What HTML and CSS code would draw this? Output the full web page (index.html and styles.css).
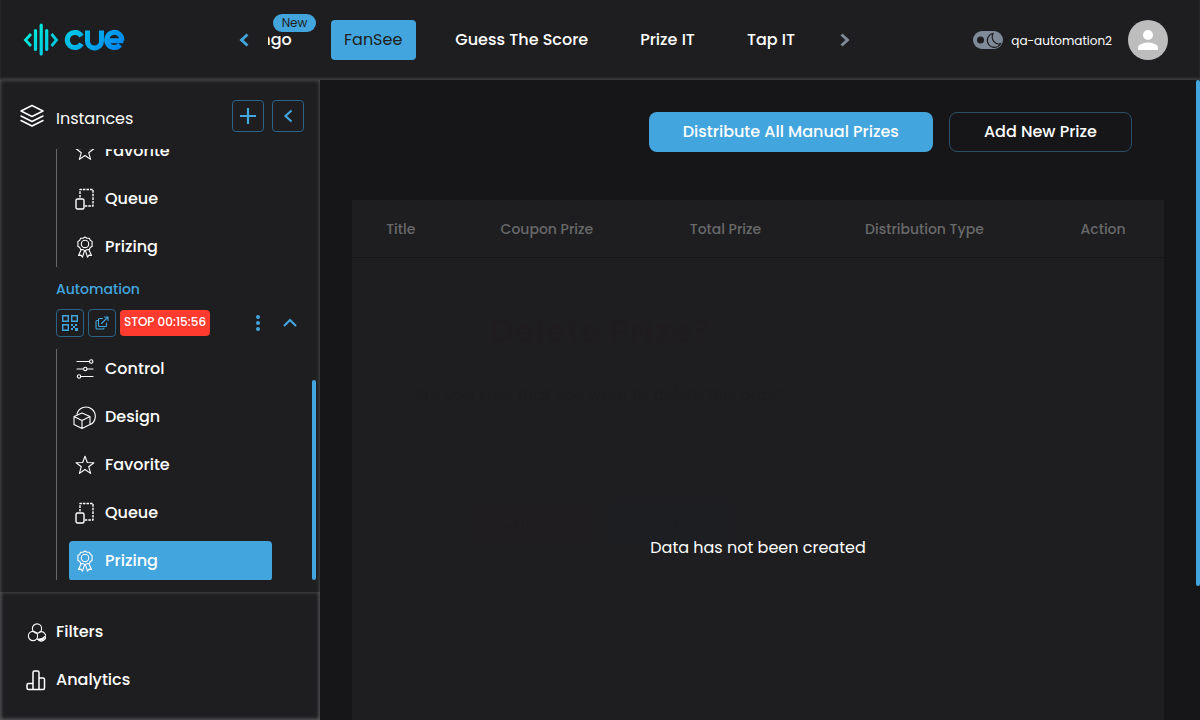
FILE: index.html
```html
<!DOCTYPE html>
<html lang="en">
<head>
<meta charset="utf-8">
<meta name="viewport" content="width=device-width, initial-scale=1">
<title>Cue – Prizing</title>
<link rel="stylesheet" href="styles.css">
</head>
<body>
<svg class="sprite" aria-hidden="true">
  <symbol id="i-star" viewBox="0 0 20 20"><path d="M10 1.200l2.300 6.300 6.600.2-5.200 4 1.900 6.700-5.600-3.900-5.600 3.900 1.900-6.700-5.200-4 6.600-.2z"/></symbol>
  <symbol id="i-queue" viewBox="0 0 20 22"><path d="M5 9.500V1.500h13v16.500H9.500" stroke-dasharray="2.600 1" stroke-width="1.400" stroke-linecap="butt"/><rect x="1" y="11" width="8" height="10" rx="1.500" stroke-width="1.400"/></symbol>
  <symbol id="i-prize" viewBox="0 0 20 22"><path d="M10 1l2 1.200 2.300.1 1 2 1.900 1.300-.2 2.300.2 2.300-1.900 1.300-1 2-2.300.1-2 1.200-2-1.200-2.300-.1-1-2-1.900-1.300.2-2.300-.2-2.300 1.900-1.300 1-2 2.300-.1z"/><circle cx="10" cy="7.900" r="3.700"/><path d="M6 14l-2.500 5.500 2.500-.4 1.500 2 2-6.300M14 14l2.500 5.500-2.500-.4-1.500 2-2-6.300"/></symbol>
  <symbol id="i-left" viewBox="0 0 16 16"><path d="M11.500 2.500L5.500 8l6 5.500"/></symbol>
</svg>
<header class="topbar">
  <a class="logo" href="#" aria-label="Cue">
    <svg width="104" height="36" viewBox="0 0 104 36" fill="none" stroke="url(#lg)">
      <defs><linearGradient id="lg" gradientUnits="userSpaceOnUse" x1="20" y1="-10" x2="85" y2="45"><stop offset="0" stop-color="#00f0d8"/><stop offset="1" stop-color="#0085f5"/></linearGradient></defs>
      <path d="M9 12L3.500 18l5.500 6M29.500 12l5 6-5 6" stroke-width="2.800"/>
      <path d="M13.500 8.500v19M19.200 3v29M24.700 8.500v19" stroke-width="3.200" stroke-linecap="round"/>
      <path d="M59.500 14.200a7.600 7.600 0 1 0 0 7.600M65.500 8.500v10.700a7 6.800 0 0 0 14 0V8.500M84.800 18.800h16.500M99.900 18.500a7.600 7.600 0 1 0-1.800 4.400" stroke-width="5"/>
    </svg>
  </a>
  <nav class="games" aria-label="Games">
    <button class="arrow accent" aria-label="Previous"><svg class="line heavy" width="16" height="16"><use href="#i-left"/></svg></button>
    <div class="tabs">
      <a class="tab first" href="#"><span class="badge">New</span>Bingo</a>
      <a class="tab active" href="#" aria-current="page">FanSee</a>
      <a class="tab" href="#">Guess The Score</a>
      <a class="tab" href="#">Prize IT</a>
      <a class="tab" href="#">Tap IT</a>
    </div>
    <button class="arrow muted" aria-label="Next"><svg class="line heavy flip" width="16" height="16"><use href="#i-left"/></svg></button>
  </nav>
  <div class="account">
    <label class="mode"><input type="checkbox" checked aria-label="Dark mode"><svg width="30" height="18" viewBox="0 0 30 18"><circle cx="7.500" cy="9" r="3.500" fill="#1e1e20"/><path d="M20 2.500a7 7 0 1 0 7.500 10.200c-5.500 1.600-10-4.200-7.500-10.200z" fill="none" stroke="#1e1e20" stroke-width="1.200"/></svg></label>
    <span class="user">qa-automation2</span>
    <button class="avatar" aria-label="Profile"><svg width="40" height="40" viewBox="0 0 40 40" fill="#fff"><circle cx="20" cy="15" r="5"/><path d="M10 30v-2.500c0-3.300 6.700-5 10-5s10 1.700 10 5V30z"/></svg></button>
  </div>
</header>
<div class="shell">
  <aside class="sidebar">
    <div class="head">
      <svg class="line thick" width="24" height="24" viewBox="0 0 24 24"><path d="M12 1.500L23 7l-11 5.500L1 7zM1 12l11 5.500L23 12M1 16.500l11 5.500 11-5.500"/></svg>
      <h2 class="heading">Instances</h2>
      <button class="square" aria-label="Add instance"><svg class="line bold" width="18" height="18" viewBox="0 0 18 18"><path d="M9 1v16M1 9h16"/></svg></button>
      <button class="square" aria-label="Collapse sidebar"><svg class="line bold" width="16" height="16"><use href="#i-left"/></svg></button>
    </div>
    <div class="instances">
      <ul class="tree">
        <li><a class="item" href="#"><svg class="line icon"><use href="#i-star"/></svg>Favorite</a></li>
        <li><a class="item" href="#"><svg class="line icon"><use href="#i-queue"/></svg>Queue</a></li>
        <li><a class="item" href="#"><svg class="line icon"><use href="#i-prize"/></svg>Prizing</a></li>
      </ul>
      <h3 class="name">Automation</h3>
      <div class="tools">
        <button class="tool" aria-label="QR code"><svg width="16" height="16" viewBox="0 0 16 16" fill="none" stroke="currentColor" stroke-width="1.400"><path d="M.7.700h5.600v5.600H.7zM9.700.7h5.600v5.600H9.700zM.7 9.700h5.600v5.600H.7z"/><path d="M9 9h2v2H9zM11 11h2v2h-2zM13 9h2v2h-2zM9 13h2v2H9zM13 13h3v3h-3z" fill="currentColor" stroke="none"/></svg></button>
        <button class="tool" aria-label="Open in new window"><svg class="line" width="14" height="14" viewBox="0 0 14 14"><path d="M7.500 2.500H4.500Q3.500 2.500 3.500 3.500v6q0 1 1 1h6q1 0 1-1V7M6.500 7.500L13 1M9.500 1H13v3.500M3 4.500H2Q1 4.500 1 5.500v6.500Q1 13 2 13h6q1 0 1-1"/></svg></button>
        <button class="stop">STOP 00:15:56</button>
        <button class="plain more" aria-label="More"><svg width="16" height="18" viewBox="0 0 16 18" fill="currentColor"><circle cx="8" cy="3" r="2"/><circle cx="8" cy="9" r="2"/><circle cx="8" cy="15" r="2"/></svg></button>
        <button class="plain" aria-label="Collapse"><svg class="line bold" width="16" height="16" viewBox="0 0 16 16"><path d="M2 11l6-6 6 6"/></svg></button>
      </div>
      <ul class="tree last">
        <li><a class="item" href="#"><svg class="line icon" viewBox="0 0 20 22"><path d="M2 3.500h12.500M2 11h6M12 11h6M6 18.500h12"/><circle cx="16.200" cy="3.500" r="1.700"/><circle cx="10.300" cy="11" r="1.700"/><circle cx="4" cy="18.500" r="1.700"/></svg>Control</a></li>
        <li><a class="item" href="#"><svg class="line icon wide" viewBox="0 0 24 24"><path d="M4 9a9.300 9.300 0 1 1 13.500 10.500M9 8l8 3.500v8L9 23.500l-8-4v-8zM1 11.500l8 4 8-4M9 15.500v8"/></svg>Design</a></li>
        <li><a class="item" href="#"><svg class="line icon"><use href="#i-star"/></svg>Favorite</a></li>
        <li><a class="item" href="#"><svg class="line icon"><use href="#i-queue"/></svg>Queue</a></li>
        <li><a class="item current" href="#" aria-current="page"><svg class="line icon"><use href="#i-prize"/></svg>Prizing</a></li>
      </ul>
      <span class="thumb"></span>
    </div>
    <nav class="extras" aria-label="Tools">
      <a class="item" href="#"><svg class="line icon" viewBox="0 0 20 22"><circle cx="11" cy="7.500" r="4.600"/><circle cx="7" cy="15" r="4.600"/><path d="M13.500 11a4.600 4.600 0 1 1-2 7.200"/><path d="M12 18c3 .4 5-.5 6.500-2.500-.5 3-3.500 5-6.500 2.500z" fill="currentColor"/></svg>Filters</a>
      <a class="item" href="#"><svg class="line icon thick" viewBox="0 0 20 22"><path d="M7 20.500V3.500Q7 2 8.500 2h3Q13 2 13 3.500v17M13 9h4q1.500 0 1.500 1.500V19q0 1.500-1.500 1.500H2.500Q1 20.500 1 19v-3q0-1.500 1.500-1.500H7"/></svg>Analytics</a>
    </nav>
  </aside>
  <main class="main">
    <div class="actions">
      <button class="btn primary">Distribute All Manual Prizes</button>
      <button class="btn outline">Add New Prize</button>
    </div>
    <section class="panel">
      <table class="prizes">
        <colgroup><col class="c-title"><col class="c-coupon"><col class="c-total"><col class="c-type"><col class="c-action"></colgroup>
        <thead><tr><th>Title</th><th>Coupon Prize</th><th>Total Prize</th><th>Distribution Type</th><th>Action</th></tr></thead>
      </table>
      <p class="empty">Data has not been created</p>
    </section>
    <span class="page-thumb"></span>
  </main>
</div>
<div class="dialog" role="dialog" aria-labelledby="dialog-title" inert>
  <h2 class="dialog-title" id="dialog-title">Delete Prize?</h2>
  <p>Are you sure that you want to delete this prize?</p>
  <div class="dialog-actions">
    <button class="choice cancel">Cancel</button>
    <button class="choice ok">Ok</button>
  </div>
</div>
</body>
</html>
```
FILE: styles.css
```css
* { box-sizing: border-box; }
body { margin: 0; height: 100vh; display: flex; flex-direction: column; overflow: hidden; background: #161618; color: #fff; font: 500 16px/24px Poppins, Inter, "Liberation Sans", sans-serif; }
a { color: inherit; text-decoration: none; }
button { margin: 0; padding: 0; border: 0; background: none; color: inherit; font: inherit; cursor: pointer; }
ul, h2, h3, p { margin: 0; padding: 0; list-style: none; font-weight: inherit; }
svg { display: block; flex: none; }
.sprite { position: absolute; width: 0; height: 0; }
.line { fill: none; stroke: currentColor; stroke-width: 1.1; stroke-linecap: round; stroke-linejoin: round; }
.thick { stroke-width: 1.5; }
.bold { stroke-width: 2.2; stroke-linecap: butt; stroke-linejoin: miter; }
.heavy { stroke-width: 2.8; stroke-linecap: butt; stroke-linejoin: miter; }
.flip { transform: scaleX(-1); }

.topbar { flex: none; height: 80px; display: flex; align-items: center; padding: 0 32px 0 22px; background: #1e1e20; box-shadow: inset 0 -2px 2px #39393b; }
.logo { width: 214px; }
.games { display: flex; align-items: center; height: 80px; }
.arrow { width: 16px; }
.accent { color: #43a5dd; }
.muted { color: #7f8a99; }
.tabs { display: flex; align-items: center; height: 80px; gap: 12px; width: 560px; margin: 0 9px 0 16px; overflow: hidden; }
.tab { position: relative; flex: none; height: 40px; padding: 0 20px; line-height: 40px; }
.tab.first { width: 56px; padding: 0; text-indent: -22px; margin-right: -5px; }
.tab.active { padding: 0 14px 0 13px; margin-right: 7px; border-radius: 4px; background: #43a5dd; color: #1e1e20; font-weight: 400; }
.badge { position: absolute; z-index: 1; top: -6px; left: 5px; width: 43px; border-radius: 9px; background: #43a5dd; color: #1e1e20; font-size: 12px; line-height: 18px; font-weight: 400; text-align: center; text-indent: 0; }
.account { display: flex; align-items: center; margin-left: auto; }
.mode { width: 30px; height: 18px; border-radius: 9px; background: #7f8a99; }
.mode input { position: absolute; opacity: 0; margin: 0; }
.user { margin: 2px 16px 0 8px; font-size: 12px; font-weight: 400; }
.avatar { width: 40px; height: 40px; border-radius: 50%; background: #bdbdbd; }

.shell { flex: 1; min-height: 0; display: flex; }
.sidebar { flex: none; width: 320px; display: flex; flex-direction: column; background: #1e1e20; box-shadow: inset 0 0 4px #5a5a5c; }
.head { display: flex; align-items: center; gap: 8px; padding: 20px 16px 17px 20px; }
.heading { flex: 1; margin: 5px 0 0 4px; font-size: 16px; font-weight: 400; }
.square { width: 32px; height: 32px; display: grid; place-items: center; border: 1px solid #2b6485; border-radius: 4px; color: #43a5dd; }
.instances { position: relative; flex: 1; min-height: 0; margin-bottom: 12px; padding: 0 48px 0 56px; overflow: hidden; display: flex; flex-direction: column; justify-content: flex-end; }
.tree { flex: none; display: grid; gap: 8px; border-left: 1px solid #68686a; padding-left: 12px; }
.tree.last { margin-bottom: -1px; }
.item { display: flex; align-items: center; gap: 10px; height: 40px; padding-left: 6px; }
.icon { width: 20px; height: 22px; }
.icon.wide { width: 24px; height: 24px; margin: 0 -2px; }
.current { border-radius: 4px; background: #43a5dd; }
.name { margin-top: 11px; font-size: 14px; line-height: 22px; color: #43a5dd; }
.tools { display: flex; align-items: center; gap: 4px; margin: 9px -32px 12px 0; color: #43a5dd; }
.tool { width: 28px; height: 28px; display: grid; place-items: center; border: 1px solid #2b6485; border-radius: 4px; }
.stop { height: 26px; width: 90px; padding-bottom: 2px; border-radius: 4px; background: #ff3b30; color: #fff; font-size: 12px; white-space: nowrap; }
.plain { width: 16px; margin-right: 6px; }
.more { margin: 0 12px 0 auto; }
.thumb { position: absolute; right: 4px; bottom: 0; width: 4px; height: 200px; border-radius: 2px; background: #43a5dd; }
.extras { display: grid; gap: 8px; padding: 20px 26px; box-shadow: inset 0 0 4px #5a5a5c; }
.extras .item { padding: 0; }

.main { position: relative; flex: 1; min-width: 0; display: flex; flex-direction: column; padding: 32px 36px 0 32px; }
.actions { display: flex; justify-content: flex-end; gap: 16px; padding-right: 32px; margin-bottom: 48px; }
.btn { height: 40px; border-radius: 8px; padding: 0 34px; }
.primary { background: #43a5dd; }
.outline { border: 1px solid #2b5068; }
.panel { flex: 1; display: flex; flex-direction: column; background: #1e1e20; }
.prizes { width: 100%; table-layout: fixed; border-collapse: collapse; }
.prizes th { height: 57px; padding: 2px 0 0; border-bottom: 1px solid #161618; color: #69696b; font-size: 14px; font-weight: 500; text-align: center; }
.c-title { width: 12%; }
.c-coupon { width: 24%; }
.c-total { width: 20%; }
.c-type { width: 29%; }
.c-action { width: 15%; }
.empty { margin: auto; padding-top: 118px; font-weight: 400; }
.page-thumb { position: absolute; right: 0; top: 0; width: 4px; height: 506px; border-radius: 2px; background: #43a5dd; }

/* Confirmation dialog in the last frame of its fade-out */
.dialog { position: absolute; left: 50%; bottom: 145px; width: 636px; margin-left: -318px; padding: 70px 32px 32px; opacity: .04; pointer-events: none; text-align: center; font-weight: 400; color: #000; }
.dialog-title { margin-bottom: 28px; font-size: 34px; line-height: 48px; font-weight: 700; color: #400018; }
.dialog-actions { display: flex; justify-content: center; gap: 20px; margin-top: 96px; }
.choice { width: 120px; height: 40px; border-radius: 4px; }
.cancel { background: #601c24; }
.ok { background: #1c3050; }
```
